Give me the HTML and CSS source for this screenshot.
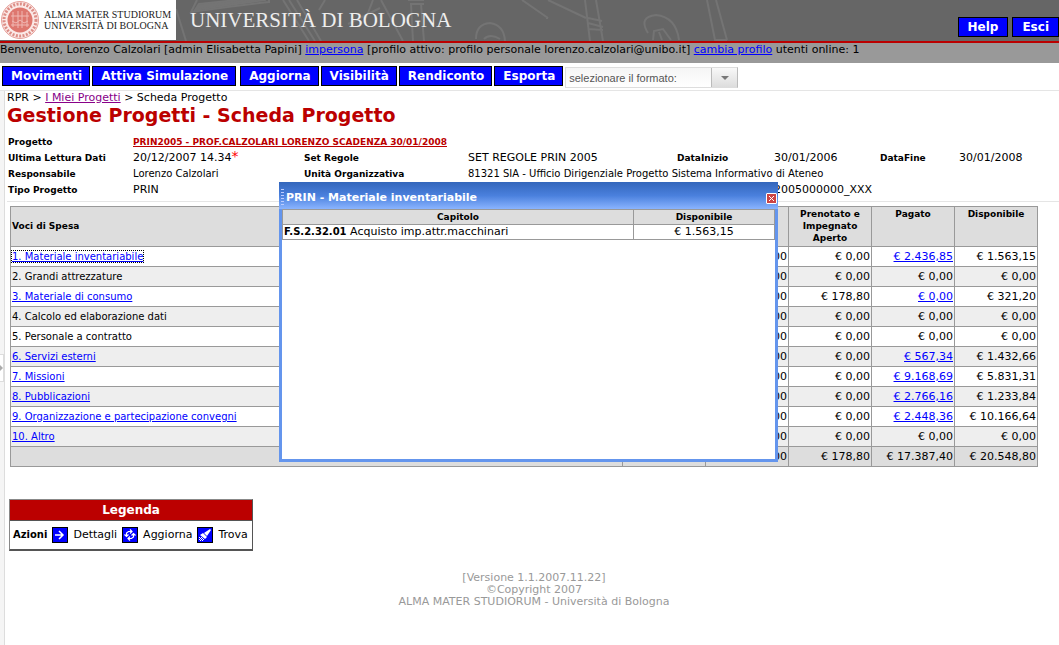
FILE: index.html
```html
<!DOCTYPE html>
<html lang="it"><head><meta charset="utf-8"><title>Scheda Progetto</title><link rel="stylesheet" href="styles.css"></head>
<body>
<header class="masthead">
  <svg class="art" width="760" height="41" viewBox="0 0 760 41" aria-hidden="true"><g fill="none" stroke="#747474" stroke-width="2">
    <path d="M176 9l10 32M197 0l-6 12q40-6 78-10V0" /><path d="M199 4l66-7v3l-70 10z" fill="#747474"/>
    <path d="M283 0l26 41M289 0l26 41M297 0l24 41M325 0l-6 10M348 24l32-16M366 18l7-18M381 0l22 41M408 0h16M410 4h14M411 4l2 37M421 4l3 37"/>
    <path d="M476 39q0-15 14-16 14 2 15 18M484 39q6-6 16 0"/>
    <path d="M522 0l26 18M585 0l5 41M596 0l7 41M548 18q-2 0-2 0M588 18l14 3M588 23l15 4M588 29l15 1" transform="translate(-0 0)"/><path d="M548 0l38 18"/>
    <path d="M648 33q-10-16 8-18 20 2 23 25M653 40l1-9 9-2 8 11M662 40l-3-8M707 0l8 40h12M716 0l11 40"/></g></svg>
  <div class="brand">
    <svg class="seal" width="40" height="40" viewBox="0 0 40 40" aria-hidden="true"><circle cx="20" cy="20" r="18.500" fill="#fbe9e7" stroke="#e8a19b"/><circle cx="20" cy="20" r="16" fill="none" stroke="#dc8d86" stroke-width="3" stroke-dasharray="2 1.400"/><circle cx="20" cy="20" r="12.500" fill="#de776f"/><path d="M11 16h18M13 12v15M18 11v17M22 11v17M27 12v15M11 25h18M12 21l4 2 4-3 4 3 4-2" stroke="#f0b9b4" fill="none"/></svg>
    <span class="mater">ALMA MATER STUDIORUM<br>UNIVERSITÀ DI BOLOGNA</span>
  </div>
  <span class="university">UNIVERSITÀ DI BOLOGNA</span>
  <div class="session"><button class="btn">Help</button><button class="btn">Esci</button></div>
</header>
<div class="welcome">Benvenuto, Lorenzo Calzolari [admin Elisabetta Papini] <a href="#">impersona</a> [profilo attivo: profilo personale lorenzo.calzolari@unibo.it] <a href="#">cambia profilo</a> utenti online: 1</div>
<nav class="toolbar"><button class="btn">Movimenti</button><button class="btn simulate">Attiva Simulazione</button><button class="btn">Aggiorna</button><button class="btn">Visibilità</button><button class="btn">Rendiconto</button><button class="btn">Esporta</button>
  <label class="picker"><select class="format" aria-label="Formato"><option>selezionare il formato:</option></select></label></nav>
<div class="shell">
  <aside class="rail"><button class="handle" aria-label="Apri pannello"></button></aside>
  <main class="page">
    <div class="crumbs">RPR &gt; <a href="#">I Miei Progetti</a> &gt; Scheda Progetto</div>
    <h1>Gestione Progetti - Scheda Progetto</h1>
    <div class="details">
      <b>Progetto</b><a class="project wide" href="#">PRIN2005 - PROF.CALZOLARI LORENZO SCADENZA 30/01/2008</a>
      <b>Ultima Lettura Dati</b><span class="value">20/12/2007 14.34<i>*</i></span><b>Set Regole</b><span class="value">SET REGOLE PRIN 2005</span><b>DataInizio</b><span class="value">30/01/2006</span><b>DataFine</b><span class="value">30/01/2008</span>
      <b>Responsabile</b><span>Lorenzo Calzolari</span><b>Unità Organizzativa</b><span class="unit">81321 SIA - Ufficio Dirigenziale Progetto Sistema Informativo di Ateneo</span>
      <b>Tipo Progetto</b><span class="value">PRIN</span><span class="value code">2005000000_XXX</span>
    </div>
    <div class="work">
    <table class="budget">
      <colgroup><col><col class="amount"><col class="amount"><col class="amount"><col class="amount"><col class="amount"></colgroup>
      <thead><tr><th class="voice">Voci di Spesa</th><th></th><th></th><th>Prenotato e Impegnato Aperto</th><th>Pagato</th><th>Disponibile</th></tr></thead>
      <tbody>
      <tr><td><a class="current" href="#">1. Materiale inventariabile</a></td><td></td><td>€ 0,00</td><td>€ 0,00</td><td><a href="#">€ 2.436,85</a></td><td>€ 1.563,15</td></tr>
      <tr><td>2. Grandi attrezzature</td><td></td><td>€ 0,00</td><td>€ 0,00</td><td>€ 0,00</td><td>€ 0,00</td></tr>
      <tr><td><a href="#">3. Materiale di consumo</a></td><td></td><td>€ 0,00</td><td>€ 178,80</td><td><a href="#">€ 0,00</a></td><td>€ 321,20</td></tr>
      <tr><td>4. Calcolo ed elaborazione dati</td><td></td><td>€ 0,00</td><td>€ 0,00</td><td>€ 0,00</td><td>€ 0,00</td></tr>
      <tr><td>5. Personale a contratto</td><td></td><td>€ 0,00</td><td>€ 0,00</td><td>€ 0,00</td><td>€ 0,00</td></tr>
      <tr><td><a href="#">6. Servizi esterni</a></td><td></td><td>€ 0,00</td><td>€ 0,00</td><td><a href="#">€ 567,34</a></td><td>€ 1.432,66</td></tr>
      <tr><td><a href="#">7. Missioni</a></td><td></td><td>€ 0,00</td><td>€ 0,00</td><td><a href="#">€ 9.168,69</a></td><td>€ 5.831,31</td></tr>
      <tr><td><a href="#">8. Pubblicazioni</a></td><td></td><td>€ 0,00</td><td>€ 0,00</td><td><a href="#">€ 2.766,16</a></td><td>€ 1.233,84</td></tr>
      <tr><td><a href="#">9. Organizzazione e partecipazione convegni</a></td><td></td><td>€ 0,00</td><td>€ 0,00</td><td><a href="#">€ 2.448,36</a></td><td>€ 10.166,64</td></tr>
      <tr><td><a href="#">10. Altro</a></td><td></td><td>€ 0,00</td><td>€ 0,00</td><td>€ 0,00</td><td>€ 0,00</td></tr>
      </tbody>
      <tfoot><tr><td></td><td></td><td>€ 0,00</td><td>€ 178,80</td><td>€ 17.387,40</td><td>€ 20.548,80</td></tr></tfoot>
    </table>
    <section class="dialog" role="dialog" aria-label="PRIN - Materiale inventariabile">
      <div class="titlebar"><span class="grip"></span><h2>PRIN - Materiale inventariabile</h2><button class="close" aria-label="Chiudi"><svg width="9" height="9" viewBox="0 0 9 9"><path d="M2 2l5 5M7 2l-5 5" stroke="#fff"/></svg></button></div>
      <table class="items"><colgroup><col><col class="available"></colgroup><thead><tr><th>Capitolo</th><th>Disponibile</th></tr></thead><tbody><tr><td><b>F.S.2.32.01</b> Acquisto imp.attr.macchinari</td><td>€ 1.563,15</td></tr></tbody></table>
    </section>
    </div>
    <section class="legend"><h3>Legenda</h3><div class="keys"><b>Azioni</b>
      <svg width="16" height="16" viewBox="0 0 16 16" aria-hidden="true"><path d="M0 0h16v16H0z"/><path fill="#00f" d="M1 1h14v14H1z"/><path d="M3 5h3l2 2M3 8h8M3 11h3M7 4l4 4-4 4" fill="none" stroke="#00f"/><path d="M3 8h8M7 4l4 4-4 4" fill="none" stroke="#fff" stroke-width="1.500"/></svg><span>Dettagli</span>
      <svg width="16" height="16" viewBox="0 0 16 16" aria-hidden="true"><path d="M0 0h16v16H0z"/><path fill="#00f" d="M1 1h14v14H1z"/><path d="M4.500 9V6l2-1.500H10M8 2.500l2 2-2 2M11.500 7v3l-2 1.500H6M8 9.500l-2 2 2 2M2.500 7.500l2 2 2-2M9.500 8.500l2-2 2 2" fill="none" stroke="#fff" stroke-width="1.200"/></svg><span>Aggiorna</span>
      <svg width="16" height="16" viewBox="0 0 16 16" aria-hidden="true"><path d="M0 0h16v16H0z"/><path fill="#00f" d="M1 1h14v14H1z"/><path d="M13 2l1 1-4 6-3-3 6-4zM6 6l4 4-2 2-5-4z" fill="#fff"/><path d="M2 10.500h4M3 11.500h4M2 12.500h6M3 13.500h4" stroke="#fff" stroke-dasharray="1 1"/></svg><span>Trova</span>
    </div></section>
    <footer>[Versione 1.1.2007.11.22]<br>©Copyright 2007<br>ALMA MATER STUDIORUM - Università di Bologna</footer>
  </main>
</div>
</body></html>
```
FILE: styles.css
```css
* { box-sizing: border-box; }
body { margin: 0; background: #fff; color: #000; font: 10px/12px "DejaVu Sans", Verdana, sans-serif; min-height: 100vh; display: flex; flex-direction: column; }
a { color: #00f; text-decoration: underline; }
button { font: inherit; padding: 0; }
h1, h2, h3 { margin: 0; }
.masthead { height: 43px; background: #666; border-bottom: 2px solid #b00; display: flex; position: relative; overflow: hidden; }
.art { position: absolute; left: 0; top: 0; }
.brand { position: relative; background: #fff; width: 176px; height: 40px; display: flex; align-items: center; gap: 4px; white-space: nowrap; }
.seal { flex: none; }
.mater { font: 10px/11px "Liberation Serif", serif; color: #222; }
.university { position: relative; font: 21px/40px "Liberation Serif", serif; color: #eee; margin-left: 14px; white-space: nowrap; }
.session { position: relative; margin-left: auto; padding-top: 17px; display: flex; gap: 4px; }
.btn { height: 20px; padding: 0 8px; border: 1px solid #000; background: #00f; color: #fff; font: bold 12px/16px "DejaVu Sans", Verdana, sans-serif; white-space: nowrap; }
.session .btn { padding: 0 9px; }
.welcome { background: #999; height: 20px; font-size: 11px; line-height: 14px; white-space: nowrap; }
.toolbar { height: 28px; padding: 3px 2px 0; display: flex; gap: 2px; border-bottom: 1px solid #e5e5e5; }
.toolbar .btn { padding: 0 7px 0 8px; }
.toolbar .simulate { margin-right: 2px; }
.picker { position: relative; width: 173px; height: 21px; margin-top: 1px; }
.picker::after { content: ""; position: absolute; right: 9px; top: 9px; border: 4px solid transparent; border-top-color: #777; border-bottom: 0; pointer-events: none; }
.format { appearance: none; display: block; width: 100%; height: 100%; padding: 0 3px; border: 1px solid #ddd; border-right-color: #bbb; border-radius: 0; color: #555; font: 11px "Liberation Sans", Arial, sans-serif; background: linear-gradient(#bbb, #bbb) no-repeat right 25px top / 1px 100%, linear-gradient(#f8f8f8, #ddd) no-repeat right / 26px 100%, linear-gradient(#f5f5f5, #fff); }
.shell { display: flex; flex: 1; }
.rail { flex: none; width: 5px; background: #f5f5f5; border-right: 1px solid #ddd; padding-top: 263px; }
.handle { display: flex; align-items: center; width: 4px; height: 28px; background: #fff; border: 1px solid #ddd; border-left: 0; }
.handle::after { content: ""; border: 3px solid transparent; border-left-color: #aaa; border-right: 0; }
.page { flex: 1; min-width: 0; padding-left: 2px; }
.crumbs { margin-top: 1px; font-size: 11px; white-space: nowrap; }
.crumbs a { color: #808; }
h1 { color: #b00; font-size: 19px; line-height: 22px; }
.details { display: grid; grid-template-columns: 125px 171px 164px 209px 97px 106px 79px 1fr; grid-auto-rows: 16px; line-height: 16px; padding: 8px 0 3px 1px; border-bottom: 1px solid #e5e5e5; white-space: nowrap; }
.details b { font-size: 9px; }
.details i { color: red; font-size: 14px; line-height: 10px; font-style: normal; }
.details .value { font-size: 11px; }
.wide { grid-column: 2 / -1; }
.unit { grid-column: 4 / -1; }
.code { grid-column: 6 / -1; }
.project { color: #b00; font-size: 9px; font-weight: bold; }
.work { position: relative; padding: 4px 21px 0 3px; }
table { border-collapse: collapse; table-layout: fixed; width: 100%; }
.amount { width: 83px; }
th { font-size: 9px; }
.budget th { border: 1px solid #999; background: #ddd; height: 40px; padding: 1px 5px 2px; vertical-align: top; }
.budget .voice { text-align: left; vertical-align: middle; padding-left: 1px; }
.budget td { border: 1px solid #999; height: 20px; padding: 0 1px; text-align: right; font-size: 11px; }
.budget td:first-child { text-align: left; font-size: 10px; }
.budget tr:nth-child(even) td, .budget tfoot td { background: #eee; }
.budget tfoot tr td { background: #ddd; }
.current { outline: 1px dotted #000; }
.dialog { position: absolute; left: 272px; top: -20px; width: 499px; height: 280px; background: #fff; border: 3px solid #6495ed; border-top: 0; }
.titlebar { height: 27px; margin: 0 -3px; padding: 5px 1px 0 2px; background: linear-gradient(#36b, #4a80dd 50%, #8ab4ff); display: flex; align-items: center; gap: 2px; color: #fff; }
.grip { width: 3px; height: 18px; background: repeating-linear-gradient(#bcf 0 1px, transparent 1px 3px); }
.titlebar h2 { flex: 1; font-size: 11px; line-height: 14px; }
.close { width: 11px; height: 11px; border: 1px solid #fff; border-radius: 1px; background: #c44; display: flex; }
.available { width: 141px; }
.items th { border: 1px solid #999; background: #ddd; height: 15px; padding: 0; }
.items td { border: 1px solid #999; height: 15px; padding: 0 1px; font-size: 11px; }
.items b { font-size: 10px; }
.items td:last-child { text-align: center; }
.legend { width: 244px; margin: 32px 0 0 2px; border: 1px solid #888; border-right-color: #555; border-bottom: 2px solid #555; }
.legend h3 { background: #b00; color: #fff; border-bottom: 1px solid #555; text-align: center; font-size: 12px; line-height: 20px; }
.keys { height: 28px; padding: 0 3px; display: flex; align-items: center; gap: 5px; white-space: nowrap; font-size: 11px; }
.keys b { font-size: 10px; }
footer { margin-top: 21px; padding-left: 2px; text-align: center; color: #999; font-size: 11px; }
```
